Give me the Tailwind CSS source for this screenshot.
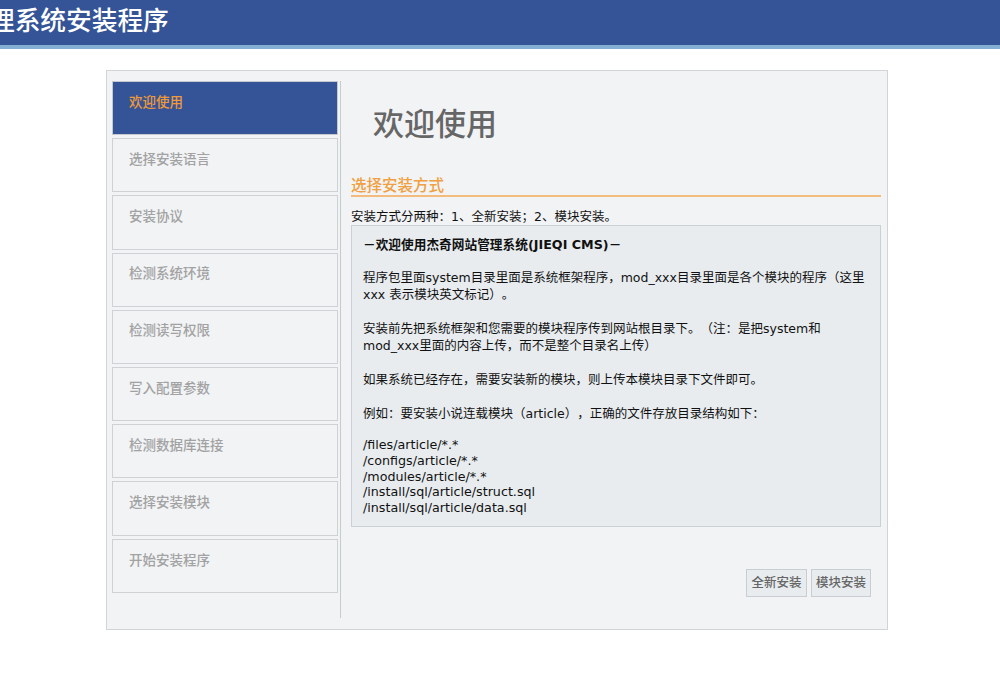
<!DOCTYPE html>
<html lang="zh-CN">
<head>
<meta charset="UTF-8" />
<title>安装程序</title>
<script src="https://cdn.jsdelivr.net/npm/@tailwindcss/browser@4"></script>
</head>
<body class="bg-white font-['DejaVu_Sans','Noto_Sans_CJK_SC',sans-serif] [text-spacing-trim:space-all]">
  <div class="h-[674px] w-[1000px] overflow-hidden">
    <!-- Header -->
    <header class="h-[49px] bg-[#345497] border-b-[4px] border-[#84aed3] overflow-hidden">
      <h1 class="-ml-[11px] pt-[5px] text-[25.7px] leading-[32px] font-medium text-white whitespace-nowrap">理系统安装程序</h1>
    </header>

    <!-- Main frame -->
    <div class="mt-[21px] ml-[106px] w-[782px] h-[560px] bg-[#f1f3f5] border border-[#d2d5d8] flex pl-[5px] pt-[10px]">
      <!-- Steps -->
      <div class="w-[229px] h-[537px] border-r border-[#c8cbce] flex flex-col gap-[3px] shrink-0">
        <div class="w-[226px] h-[54.2px] bg-[#345497] border border-[#c5c9ce] pl-[16px] pt-[10px] text-[13.5px] leading-[20px] font-medium text-[#f0993a]">欢迎使用</div>
        <div class="w-[226px] h-[54.2px] border-[1.5px] border-[#cfd2d5] pl-[16px] pt-[9.5px] text-[13.5px] leading-[20px] font-medium text-[#a2a2a2]">选择安装语言</div>
        <div class="w-[226px] h-[54.2px] border-[1.5px] border-[#cfd2d5] pl-[16px] pt-[9.5px] text-[13.5px] leading-[20px] font-medium text-[#a2a2a2]">安装协议</div>
        <div class="w-[226px] h-[54.2px] border-[1.5px] border-[#cfd2d5] pl-[16px] pt-[9.5px] text-[13.5px] leading-[20px] font-medium text-[#a2a2a2]">检测系统环境</div>
        <div class="w-[226px] h-[54.2px] border-[1.5px] border-[#cfd2d5] pl-[16px] pt-[9.5px] text-[13.5px] leading-[20px] font-medium text-[#a2a2a2]">检测读写权限</div>
        <div class="w-[226px] h-[54.2px] border-[1.5px] border-[#cfd2d5] pl-[16px] pt-[10px] text-[13.5px] leading-[20px] font-medium text-[#a2a2a2]">写入配置参数</div>
        <div class="w-[226px] h-[54.2px] border-[1.5px] border-[#cfd2d5] pl-[16px] pt-[10px] text-[13.5px] leading-[20px] font-medium text-[#a2a2a2]">检测数据库连接</div>
        <div class="w-[226px] h-[54.2px] border-[1.5px] border-[#cfd2d5] pl-[16px] pt-[10px] text-[13.5px] leading-[20px] font-medium text-[#a2a2a2]">选择安装模块</div>
        <div class="w-[226px] h-[54.2px] border-[1.5px] border-[#cfd2d5] pl-[16px] pt-[10px] text-[13.5px] leading-[20px] font-medium text-[#a2a2a2]">开始安装程序</div>
      </div>

      <!-- Content -->
      <div class="ml-[10px] w-[530px] flex flex-col">
        <h2 class="pl-[22px] pt-[23px] h-[96px] text-[31px] leading-[40px] font-medium text-[#666666]">欢迎使用</h2>
        <h3 class="h-[18px] text-[15.5px] leading-[18px] font-medium text-[#f0a040]">选择安装方式</h3>
        <div class="h-[2px] bg-[#f4bc7c]"></div>
        <p class="pt-[12px] h-[28px] text-[12.5px] leading-[16px] text-[#111111]">安装方式分两种：1、全新安装；2、模块安装。</p>
        <div class="h-[302px] bg-[#e8ecef] border border-[#c9d0d6] px-[11px] pt-[11px] text-[12.5px] leading-[16.9px] text-[#111111]">
          <p class="font-bold text-[12.7px]">－欢迎使用杰奇网站管理系统(JIEQI CMS)－</p>
          <p class="mt-[16.5px]">程序包里面system目录里面是系统框架程序，mod_xxx目录里面是各个模块的程序（这里xxx 表示模块英文标记）。</p>
          <p class="mt-[17px]">安装前先把系统框架和您需要的模块程序传到网站根目录下。（注：是把system和mod_xxx里面的内容上传，而不是整个目录名上传）</p>
          <p class="mt-[16.9px]">如果系统已经存在，需要安装新的模块，则上传本模块目录下文件即可。</p>
          <p class="mt-[16.9px]">例如：要安装小说连载模块（article），正确的文件存放目录结构如下：</p>
          <p class="mt-[14.5px] text-[12.7px] leading-[15.7px]">/files/article/*.*<br />/configs/article/*.*<br />/modules/article/*.*<br />/install/sql/article/struct.sql<br />/install/sql/article/data.sql</p>
        </div>
        <div class="mt-[42px] flex justify-end gap-[4px] pr-[10px]">
          <button class="w-[61px] h-[28px] bg-[#e8ecef] border border-[#c9cdd1] text-[12.5px] font-medium text-[#666666]">全新安装</button>
          <button class="w-[60px] h-[28px] bg-[#e8ecef] border border-[#c9cdd1] text-[12.5px] font-medium text-[#666666]">模块安装</button>
        </div>
      </div>
    </div>
  </div>
</body>
</html>
